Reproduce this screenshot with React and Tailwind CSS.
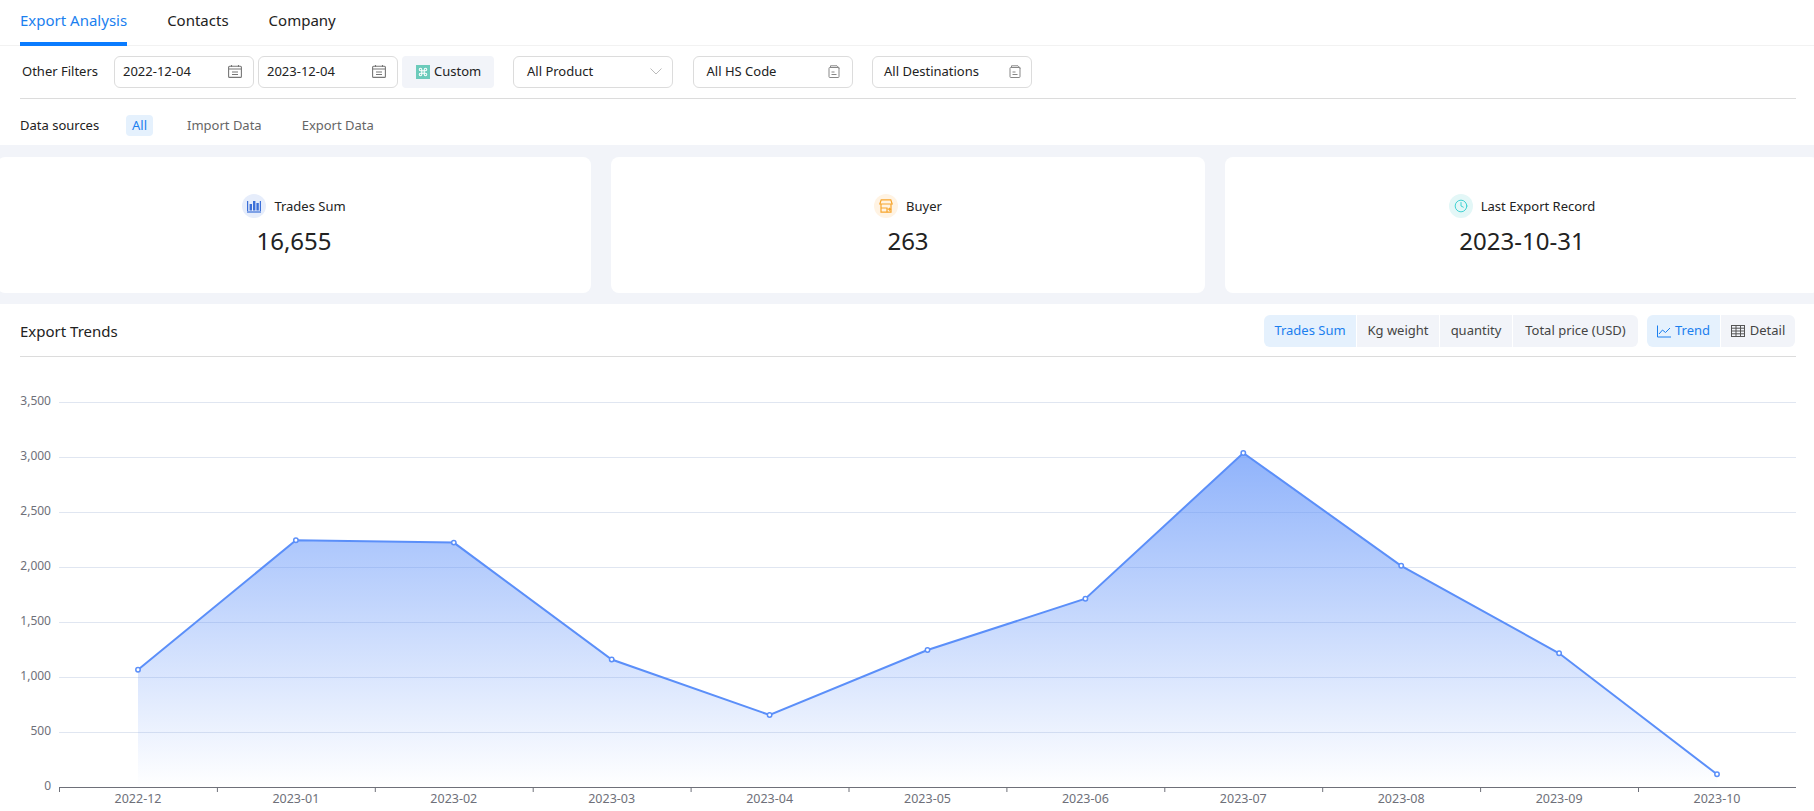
import React from "react";
import { Command, Clock } from "lucide-react";

const months = ["2022-12", "2023-01", "2023-02", "2023-03", "2023-04", "2023-05", "2023-06", "2023-07", "2023-08", "2023-09", "2023-10"];
// y positions of each point, relative to the chart svg
const points = [669.7, 540.3, 542.6, 659.5, 715, 650, 598.7, 453, 565.8, 653.3, 774.3].map((y, i) => ({
  x: 138 + i * 157.9,
  y: y - 357,
}));
const gridLines = ["3,500", "3,000", "2,500", "2,000", "1,500", "1,000", "500"];

function CalendarIcon() {
  return (
    <svg width="14" height="13" viewBox="0 0 14 13" fill="none" stroke="#777" strokeWidth="1.1">
      <rect x="0.6" y="1.2" width="12.8" height="11.2" rx="1" />
      <path d="M0.6 4h12.8M3.5 0v2M10.5 0v2" />
      <path d="M4 7h6M4 9.5h6" />
    </svg>
  );
}

function FileIcon() {
  return (
    <svg width="12" height="13" viewBox="0 0 12 13" fill="none" stroke="#888" strokeWidth="1">
      <path d="M2.5 2V0.8h6.5L11 2.8v1" />
      <rect x="1" y="2.5" width="10" height="10" rx="0.8" />
      <path d="M3.5 7h3M3.5 9.5h5" />
    </svg>
  );
}

function DateBox({ value }) {
  return (
    <div className="flex w-[140px] h-8 items-center justify-between pl-2 pr-[11px] border border-[#dcdcdc] rounded-md">
      <span>{value}</span>
      <CalendarIcon />
    </div>
  );
}

function SelectBox({ label, icon, padding }) {
  return (
    <div className={`flex w-[160px] h-8 items-center justify-between border border-[#dcdcdc] rounded-md ${padding}`}>
      <span>{label}</span>
      {icon}
    </div>
  );
}

function StatCard({ icon, iconBg, label, value }) {
  return (
    <div className="flex flex-col items-center pt-[37px] bg-white rounded-lg">
      <div className="flex h-6 items-center gap-2">
        <span className={`flex w-6 h-6 items-center justify-center rounded-full ${iconBg}`}>{icon}</span>
        <span className="pt-px">{label}</span>
      </div>
      <div className="mt-[7px] text-2xl leading-8 text-[#222]">{value}</div>
    </div>
  );
}

export default function App() {
  const line = points.map((p) => `${p.x},${p.y}`).join(" ");
  const area = `${points[0].x},430 ${line} ${points[points.length - 1].x},430`;
  return (
    <div className="w-[1814px] h-[811px] overflow-hidden bg-white text-[13px] text-[#222] font-['Noto_Sans',sans-serif]">
      <div className="flex h-[46px] gap-10 pl-5 border-b border-[#f2f2f2] text-[15px]">
        <div className="h-[46px] leading-[40px] border-b-4 border-[#0a7cff] text-[#1b7fef]">Export Analysis</div>
        <div className="leading-[40px]">Contacts</div>
        <div className="leading-[40px]">Company</div>
      </div>

      <div className="ml-5 w-[1776px] border-b border-[#dcdcdc]">
        <div className="flex h-[52px] items-center pb-px">
          <span className="ml-[2px] w-[92px]">Other Filters</span>
          <div className="flex gap-1">
            <DateBox value="2022-12-04" />
            <DateBox value="2023-12-04" />
            <div className="flex w-[92px] h-8 items-center gap-1 pl-[14px] bg-[#f2f4f9] rounded">
              <span className="flex w-[14px] h-[14px] items-center justify-center bg-[#6ccbbb]">
                <Command size={10} color="#fff" strokeWidth={2.5} />
              </span>
              Custom
            </div>
          </div>
          <div className="flex ml-[19px] gap-[19.5px]">
            <SelectBox
              label="All Product"
              padding="pl-[13px] pr-[10px]"
              icon={
                <svg width="12" height="7" viewBox="0 0 12 7" fill="none" stroke="#bbb">
                  <path d="M0.5 0.5l5.5 5.5 5.5-5.5" />
                </svg>
              }
            />
            <SelectBox label="All HS Code" padding="pl-[13px] pr-3" icon={<FileIcon />} />
            <SelectBox label="All Destinations" padding="pl-[11px] pr-[10px]" icon={<FileIcon />} />
          </div>
        </div>
      </div>

      <div className="flex h-[46px] items-center pt-[7px] pl-5">
        <span className="w-[106px]">Data sources</span>
        <div className="flex gap-7 text-[#666]">
          <span className="flex h-[21px] items-center px-[6px] bg-[#e5f1fd] text-[#1b7fef] rounded-sm">All</span>
          <span className="flex h-[21px] items-center px-[6px]">Import Data</span>
          <span className="flex h-[21px] items-center px-[6px]">Export Data</span>
        </div>
      </div>

      <div className="bg-[#f2f4f9] pt-3 pb-[11px]">
        <div className="grid grid-cols-3 gap-5 w-[1822px] h-[136px] -ml-[3px]">
          <StatCard
            iconBg="bg-[#e6edfb]"
            label="Trades Sum"
            value="16,655"
            icon={
              <svg width="14" height="14" viewBox="0 0 14 14" fill="#3b6fd8">
                <rect x="0" y="2" width="1.2" height="10" />
                <rect x="2.6" y="5" width="2.4" height="6.5" />
                <rect x="6" y="2" width="2.4" height="9.5" />
                <rect x="9.4" y="4" width="2.4" height="7.5" />
                <rect x="12.8" y="2" width="1.2" height="10" />
                <rect x="0" y="12.4" width="14" height="1.2" />
              </svg>
            }
          />
          <StatCard
            iconBg="bg-[#fff3e3]"
            label="Buyer"
            value="263"
            icon={
              <svg width="14" height="14" viewBox="0 0 14 14" fill="none" stroke="#f7a52c" strokeWidth="1.2">
                <path d="M2.2 0.8h9.6l1.4 4.2H0.8z" />
                <path d="M2 5v8.2h10V5" />
                <path d="M2 9h6v4.2" />
                <path d="M8.5 10.2h3M10.2 8.8l1.4 1.4-1.4 1.4" />
              </svg>
            }
          />
          <StatCard
            iconBg="bg-[#e3f7f7]"
            label="Last Export Record"
            value="2023-10-31"
            icon={<Clock size={14} color="#35cfcf" strokeWidth={1.6} />}
          />
        </div>
      </div>

      <div className="ml-5 w-[1776px]">
        <div className="flex h-[53px] items-center justify-between pr-px pt-[2px] border-b border-[#dcdcdc]">
          <span className="text-[15px]">Export Trends</span>
          <div className="flex gap-[9px] text-[#444]">
            <div className="flex h-8 gap-px rounded-md overflow-hidden">
              <span className="flex w-[92px] items-center justify-center bg-[#e5f1fd] text-[#1b7fef]">Trades Sum</span>
              <span className="flex w-[82px] items-center justify-center bg-[#f2f4f9]">Kg weight</span>
              <span className="flex w-[72px] items-center justify-center bg-[#f2f4f9]">quantity</span>
              <span className="flex w-[125px] items-center justify-center bg-[#f2f4f9]">Total price (USD)</span>
            </div>
            <div className="flex h-8 gap-px rounded-md overflow-hidden">
              <span className="flex w-[73px] items-center justify-center gap-1 bg-[#e5f1fd] text-[#1b7fef]">
                <svg width="14" height="13" viewBox="0 0 14 13" fill="none" stroke="#1b7fef">
                  <path d="M0.5 0.5v11.5h13.5" />
                  <path d="M2 9l3.5-4 3 2.5L13 3" />
                </svg>
                Trend
              </span>
              <span className="flex w-[74px] items-center justify-center gap-[5px] bg-[#f2f4f9]">
                <svg width="14" height="12" viewBox="0 0 14 12" fill="none" stroke="#555">
                  <rect x="0.5" y="0.5" width="13" height="11" />
                  <path d="M0.5 3.2h13M0.5 6h13M0.5 8.8h13M5 0.5v11M9.5 0.5v11" />
                </svg>
                Detail
              </span>
            </div>
          </div>
        </div>
      </div>

      <svg width="1814" height="454" className="block font-['Noto_Sans',sans-serif]">
        <defs>
          <linearGradient id="areaFill" x1="0" y1="96" x2="0" y2="430" gradientUnits="userSpaceOnUse">
            <stop offset="0" stopColor="#5b8ff9" stopOpacity="0.68" />
            <stop offset="1" stopColor="#5b8ff9" stopOpacity="0" />
          </linearGradient>
        </defs>
        {gridLines.map((label, i) => (
          <g key={label}>
            <line x1="59" x2="1796" y1={45.5 + i * 55} y2={45.5 + i * 55} stroke="#e0e6f1" />
            <text x="51" y={45.5 + i * 55 - 1} textAnchor="end" dominantBaseline="middle" fontSize="12" fill="#6e7079">
              {label}
            </text>
          </g>
        ))}
        <text x="51" y="430" textAnchor="end" dominantBaseline="middle" fontSize="12" fill="#6e7079">
          0
        </text>
        <polygon points={area} fill="url(#areaFill)" />
        <line x1="59" x2="1796" y1="430.5" y2="430.5" stroke="#6e7079" />
        {months.map((m, i) => (
          <g key={m}>
            <line x1={59.5 + i * 157.9} x2={59.5 + i * 157.9} y1="430" y2="435" stroke="#6e7079" />
            <text x={138 + i * 157.9} y="442.5" textAnchor="middle" dominantBaseline="middle" fontSize="12.5" fill="#6e7079">
              {m}
            </text>
          </g>
        ))}
        <polyline points={line} fill="none" stroke="#5b8ff9" strokeWidth="2" />
        {points.map((p) => (
          <circle key={p.x} cx={p.x} cy={p.y} r="2.2" fill="#fff" stroke="#5b8ff9" strokeWidth="1.5" />
        ))}
      </svg>
    </div>
  );
}
